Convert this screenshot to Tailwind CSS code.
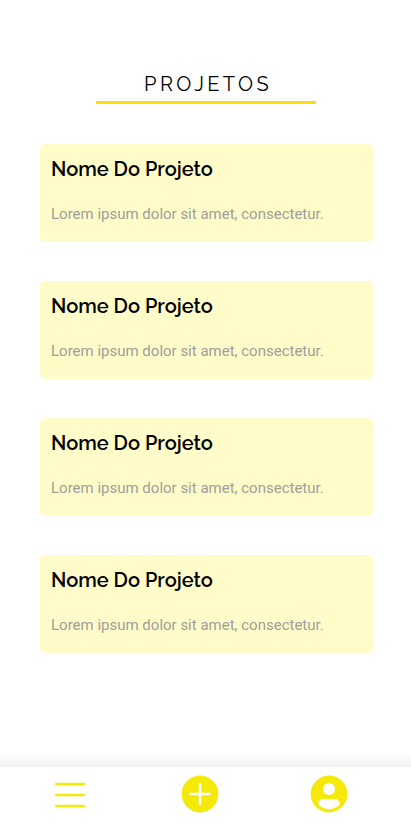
<!DOCTYPE html>
<html lang="pt-BR">
<head>
<meta charset="utf-8">
<title>Projetos</title>
<script src="https://cdn.jsdelivr.net/npm/@tailwindcss/browser@4"></script>
</head>
<body class="flex h-[823px] flex-col overflow-hidden bg-white">
  <header class="flex justify-center pt-[70px]">
    <h1 class="h-[34px] w-[220px] border-b-3 border-[#fbdf0b] pl-[5px] text-center font-[Raleway,Montserrat,Lato,sans-serif] text-[20px] leading-[28px] font-normal tracking-[3.4px] text-black">PROJETOS</h1>
  </header>
  <main class="flex flex-1 flex-col gap-[39px] pt-10 pr-[38.4px] pl-10">
    <article class="h-[98px] rounded-[5px] bg-[#fffcc9] pt-3 pl-[11px]">
      <h2 class="font-[Raleway,Lato,sans-serif] text-[20px] leading-[27px] font-semibold text-black">Nome Do Projeto</h2>
      <p class="mt-[21px] font-[Roboto,sans-serif] text-[15px] leading-5 text-[#9f9e99]">Lorem ipsum dolor sit amet, consectetur.</p>
    </article>
    <article class="h-[98px] rounded-[5px] bg-[#fffcc9] pt-3 pl-[11px]">
      <h2 class="font-[Raleway,Lato,sans-serif] text-[20px] leading-[27px] font-semibold text-black">Nome Do Projeto</h2>
      <p class="mt-[21px] font-[Roboto,sans-serif] text-[15px] leading-5 text-[#9f9e99]">Lorem ipsum dolor sit amet, consectetur.</p>
    </article>
    <article class="h-[98px] rounded-[5px] bg-[#fffcc9] pt-3 pl-[11px]">
      <h2 class="font-[Raleway,Lato,sans-serif] text-[20px] leading-[27px] font-semibold text-black">Nome Do Projeto</h2>
      <p class="mt-[21px] font-[Roboto,sans-serif] text-[15px] leading-5 text-[#9f9e99]">Lorem ipsum dolor sit amet, consectetur.</p>
    </article>
    <article class="h-[98px] rounded-[5px] bg-[#fffcc9] pt-3 pl-[11px]">
      <h2 class="font-[Raleway,Lato,sans-serif] text-[20px] leading-[27px] font-semibold text-black">Nome Do Projeto</h2>
      <p class="mt-[21px] font-[Roboto,sans-serif] text-[15px] leading-5 text-[#9f9e99]">Lorem ipsum dolor sit amet, consectetur.</p>
    </article>
  </main>
  <div class="h-[14px] bg-linear-to-b from-white to-[#f1f1f1]"></div>
  <nav class="flex h-14 items-start justify-between bg-white pt-2 pr-[63px] pl-[55px] text-[#f4e90b]">
    <svg class="mt-[6px] h-[28px] w-[30px]" viewBox="0 0 30 28" fill="none" stroke="currentColor" stroke-width="2.6" stroke-linecap="round"><path d="M1.2 3.1h27.6M1.2 14h27.6M1.2 25h27.6"/></svg>
    <svg class="ml-[4px] h-[38px] w-[38px]" viewBox="0 0 38 38"><circle cx="19" cy="19" r="18.4" fill="currentColor"/><path d="M19 9.2v19.6M9.2 19h19.6" fill="none" stroke="white" stroke-width="2.5" stroke-linecap="round"/></svg>
    <svg class="h-[38px] w-[38px]" viewBox="0 0 38 38"><circle cx="19" cy="19" r="18.4" fill="currentColor"/><circle cx="19" cy="14" r="6.1" fill="white"/><path d="M13.2 24h11.6c3 0 5.1 2.2 4.8 4.6-.3 2.7-5.5 5.6-10.6 5.6s-10.300-2.900-10.600-5.600c-.3-2.400 1.800-4.600 4.800-4.600z" fill="white"/></svg>
  </nav>
</body>
</html>
